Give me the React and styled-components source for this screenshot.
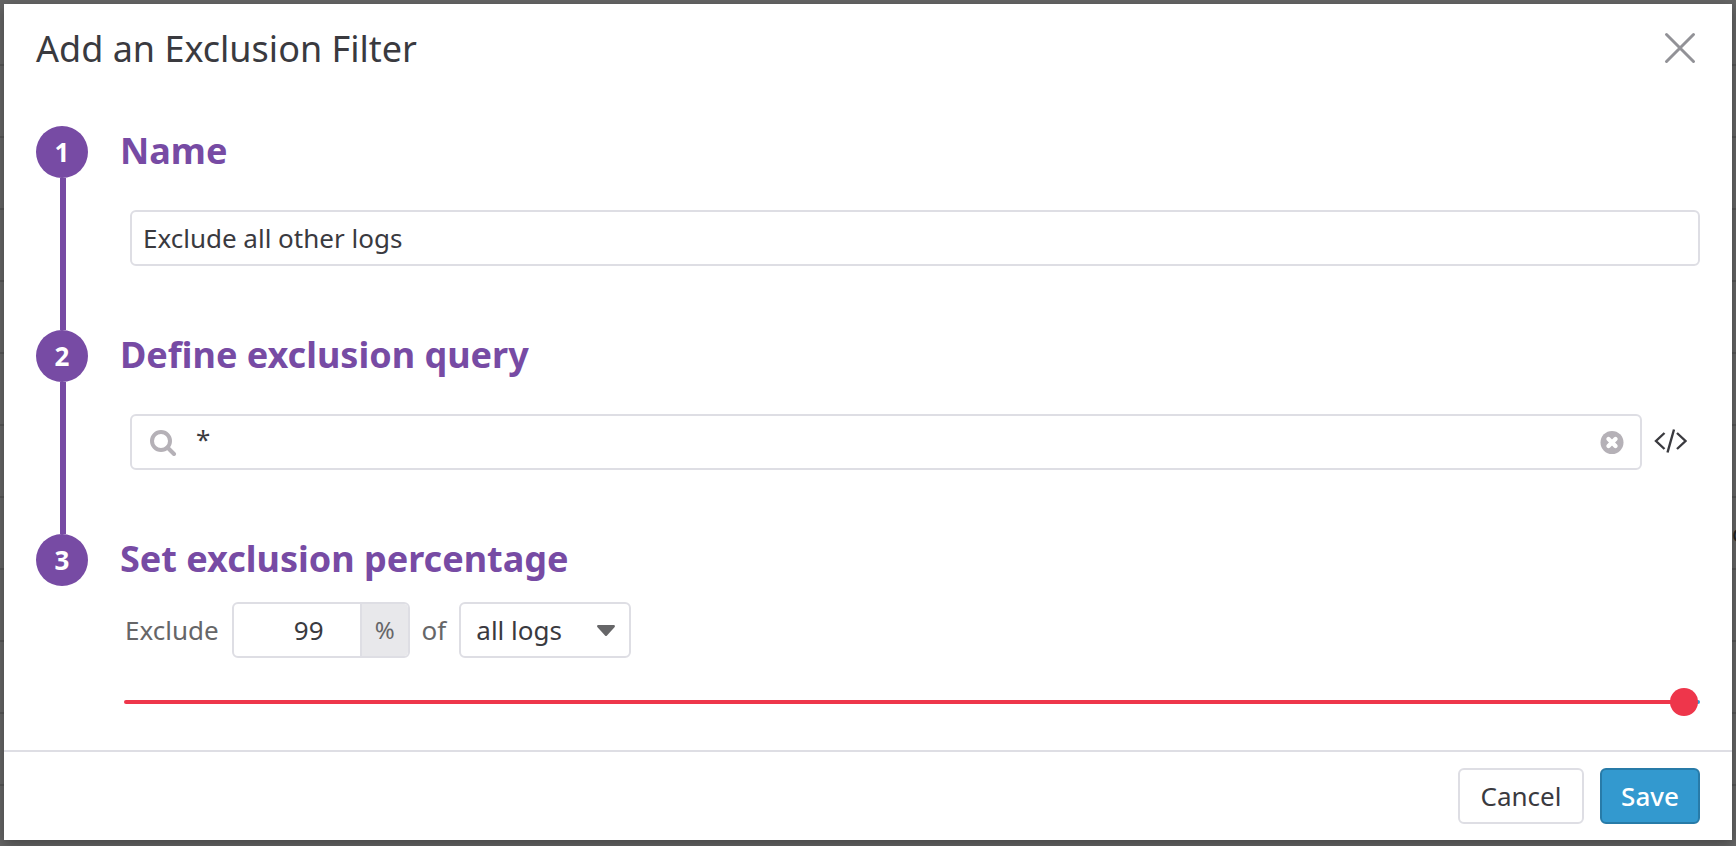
import React, { useState } from "react";
import styled, { createGlobalStyle } from "styled-components";

const GlobalStyle = createGlobalStyle`
  *, *::before, *::after { box-sizing: border-box; }
  body { margin: 0; background: #626262; }
  body, button, input, select { font-family: "Noto Sans", sans-serif; }
`;

const colors = {
  text: "#3a3a3f",
  muted: "#666668",
  purple: "#774ba4",
  border: "#dedee4",
  red: "#ee364b",
  blue: "#3399cf",
};

const Backdrop = styled.div`
  position: relative;
  min-height: 100vh;
  padding: 4px 4px 6px;
  overflow: hidden;
  background: repeating-linear-gradient(#656565 0 64px, #565656 64px 66px, #656565 66px 72px);
`;

/* Text of the dimmed page that shows past the dialog's edge. */
const DimmedText = styled.span`
  position: absolute;
  top: 517px;
  left: calc(100% - 4px);
  color: #222;
  font-size: 24px;
  line-height: 32px;
`;

const Dialog = styled.section`
  position: relative;
  background: #fff;
  color: ${colors.text};
  box-shadow: 0 4px 12px rgba(0, 0, 0, 0.3);
`;

const Header = styled.header`
  display: flex;
  align-items: center;
  justify-content: space-between;
  padding: 16px 32px 0;
`;

const Title = styled.h1`
  margin: 0;
  font-size: 36px;
  font-weight: 400;
  line-height: 58px;
`;

const IconButton = styled.button`
  display: flex;
  align-items: center;
  justify-content: center;
  flex: none;
  padding: 0;
  border: 0;
  background: none;
  color: ${(p) => p.$color || colors.text};
  cursor: pointer;
`;

const Steps = styled.ol`
  list-style: none;
  margin: 0;
  padding: 48px 32px 34px;
`;

const Step = styled.li`
  display: flex;
  gap: 32px;
`;

const Rail = styled.div`
  display: flex;
  flex: none;
  flex-direction: column;
  width: 52px;
`;

const Badge = styled.span`
  width: 52px;
  height: 52px;
  border-radius: 50%;
  background: ${colors.purple};
  color: #fff;
  font-size: 26px;
  font-weight: 700;
  line-height: 52px;
  text-align: center;
`;

const Connector = styled.span`
  flex: 1;
  width: 6px;
  margin-left: 24px;
  background: ${colors.purple};
`;

const StepBody = styled.div`
  flex: 1;
  min-width: 0;
  padding-bottom: ${(p) => (p.$last ? 0 : 64)}px;
`;

const StepTitle = styled.h2`
  margin: 0;
  padding-bottom: 2px;
  color: ${colors.purple};
  font-size: 36px;
  font-weight: 700;
  line-height: 50px;
`;

const FieldRow = styled.div`
  display: flex;
  align-items: center;
  gap: 12px;
  margin: 32px 0 0 10px;
`;

const Field = styled.div`
  display: flex;
  flex: ${(p) => (p.$fixed ? "none" : 1)};
  align-items: center;
  height: 56px;
  min-width: 0;
  overflow: hidden;
  border: 2px solid ${colors.border};
  border-radius: 6px;
  background: #fff;
`;

const TextInput = styled.input`
  flex: 1;
  min-width: 0;
  height: 52px;
  padding: 0 11px;
  border: 0;
  outline: 0;
  background: none;
  color: ${colors.text};
  font-size: 26px;
`;

const SearchInput = styled(TextInput)`
  padding: 0 19px 6px;
`;

const SearchIcon = styled.svg`
  flex: none;
  margin-left: 17px;
`;

const ClearButton = styled(IconButton)`
  margin-right: 16px;
`;

const CodeButton = styled(IconButton)`
  width: 34px;
  margin-right: 12px;
`;

const RateRow = styled.div`
  display: flex;
  align-items: center;
  gap: 12px;
  margin: 16px 0 0 5px;
  color: ${colors.muted};
  font-size: 26px;
`;

const RateLabel = styled.label`
  padding-right: 1px;
`;

const NumberInput = styled(TextInput)`
  flex: none;
  width: 126px;
  padding: 0 36px 0 0;
  text-align: right;
`;

const Unit = styled.span`
  width: 48px;
  height: 52px;
  border-left: 2px solid ${colors.border};
  background: #e8e8eb;
  font-size: 24px;
  line-height: 52px;
  text-align: center;
`;

const SelectField = styled.div`
  display: grid;
  align-items: center;
  width: 172px;
`;

const Select = styled.select`
  grid-area: 1 / 1;
  height: 56px;
  padding: 0 48px 0 15px;
  border: 2px solid ${colors.border};
  border-radius: 6px;
  outline: 0;
  appearance: none;
  background: #fff;
  color: ${colors.text};
  font-size: 26px;
`;

const Caret = styled.svg`
  grid-area: 1 / 1;
  justify-self: end;
  margin-right: 16px;
  pointer-events: none;
`;

const SliderTrack = styled.div`
  display: flex;
  align-items: center;
  height: 4px;
  margin: 42px 0 12px 4px;
  border-radius: 2px;
  background: linear-gradient(
    to right,
    ${colors.red} ${(p) => p.$value}%,
    ${colors.blue} ${(p) => p.$value}%
  );
`;

/* Wider than its track by half a thumb on each side, so the thumb's centre spans the whole track. */
const Slider = styled.input`
  flex: 1 0 calc(100% + 28px);
  height: 28px;
  margin: 0 -14px;
  appearance: none;
  background: none;

  &::-webkit-slider-thumb {
    appearance: none;
    width: 28px;
    height: 28px;
    border-radius: 50%;
    background: ${colors.red};
  }
`;

const Footer = styled.footer`
  display: flex;
  justify-content: flex-end;
  gap: 16px;
  padding: 16px 32px;
  border-top: 2px solid ${colors.border};
`;

const Button = styled.button`
  height: 56px;
  min-width: ${(p) => (p.$primary ? 100 : 126)}px;
  padding: 0 16px;
  border: 2px solid ${(p) => (p.$primary ? "#287ba8" : colors.border)};
  border-radius: 6px;
  background: ${(p) => (p.$primary ? colors.blue : "#fff")};
  color: ${(p) => (p.$primary ? "#fff" : colors.text)};
  font-size: 26px;
  font-weight: ${(p) => (p.$primary ? 500 : 400)};
`;

function NumberedStep({ number, title, last, children }) {
  return (
    <Step>
      <Rail>
        <Badge>{number}</Badge>
        {!last && <Connector />}
      </Rail>
      <StepBody $last={last}>
        <StepTitle>{title}</StepTitle>
        {children}
      </StepBody>
    </Step>
  );
}

export default function App() {
  const [name, setName] = useState("Exclude all other logs");
  const [query, setQuery] = useState("*");
  const [rate, setRate] = useState(99);
  const changeRate = (e) => setRate(e.target.value);

  return (
    <Backdrop>
      <GlobalStyle />
      <DimmedText aria-hidden="true">c</DimmedText>
      <Dialog role="dialog" aria-labelledby="dialog-title">
        <Header>
          <Title id="dialog-title">Add an Exclusion Filter</Title>
          <IconButton aria-label="Close" $color="#929297">
            <svg width="40" height="40" viewBox="0 0 40 40" fill="none" stroke="currentColor" strokeWidth="3" strokeLinecap="round">
              <path d="M6.500 5.500l27 27M33.500 5.500l-27 27" />
            </svg>
          </IconButton>
        </Header>

        <Steps>
          <NumberedStep number={1} title="Name">
            <FieldRow>
              <Field>
                <TextInput aria-label="Name" value={name} onChange={(e) => setName(e.target.value)} />
              </Field>
            </FieldRow>
          </NumberedStep>

          <NumberedStep number={2} title="Define exclusion query">
            <FieldRow>
              <Field>
                <SearchIcon width="28" height="28" viewBox="0 0 28 28" fill="none" stroke="#b5b1b7" strokeWidth="4">
                  <circle cx="12" cy="13" r="9" />
                  <path d="M18.500 19.500L25 26" strokeLinecap="round" />
                </SearchIcon>
                <SearchInput aria-label="Exclusion query" value={query} onChange={(e) => setQuery(e.target.value)} />
                <ClearButton aria-label="Clear query" onClick={() => setQuery("")}>
                  <svg width="24" height="24" viewBox="0 0 24 24">
                    <circle cx="12" cy="12.500" r="11.500" fill="#b5b1b7" />
                    <path d="M8.500 9l7 7M15.500 9l-7 7" stroke="#fff" strokeWidth="4.400" strokeLinecap="round" />
                  </svg>
                </ClearButton>
              </Field>
              <CodeButton aria-label="Edit as code">
                <svg width="34" height="26" viewBox="0 0 34 26" fill="none" stroke="currentColor" strokeWidth="2.400">
                  <path d="M10.500 4L2 12l8.500 8M23 4l8.500 8-8.500 8M20 .5l-6.500 23" />
                </svg>
              </CodeButton>
            </FieldRow>
          </NumberedStep>

          <NumberedStep number={3} title="Set exclusion percentage" last>
            <RateRow>
              <RateLabel htmlFor="rate">Exclude</RateLabel>
              <Field $fixed>
                <NumberInput id="rate" inputMode="numeric" value={rate} onChange={changeRate} />
                <Unit>%</Unit>
              </Field>
              <RateLabel htmlFor="scope">of</RateLabel>
              <SelectField>
                <Select id="scope">
                  <option>all logs</option>
                </Select>
                <Caret width="18" height="14" viewBox="0 0 18 14" fill={colors.muted}>
                  <path d="M1.500 2h15c1.300 0 1.900 1.200 1 2.200L10 12.500c-.6.700-1.400.7-2 0L.5 4.200C-.4 3.200.2 2 1.500 2z" />
                </Caret>
              </SelectField>
            </RateRow>
            <SliderTrack $value={rate}>
              <Slider type="range" min="0" max="100" value={rate} onChange={changeRate} aria-label="Exclusion percentage" />
            </SliderTrack>
          </NumberedStep>
        </Steps>

        <Footer>
          <Button type="button">Cancel</Button>
          <Button type="button" $primary>Save</Button>
        </Footer>
      </Dialog>
    </Backdrop>
  );
}
